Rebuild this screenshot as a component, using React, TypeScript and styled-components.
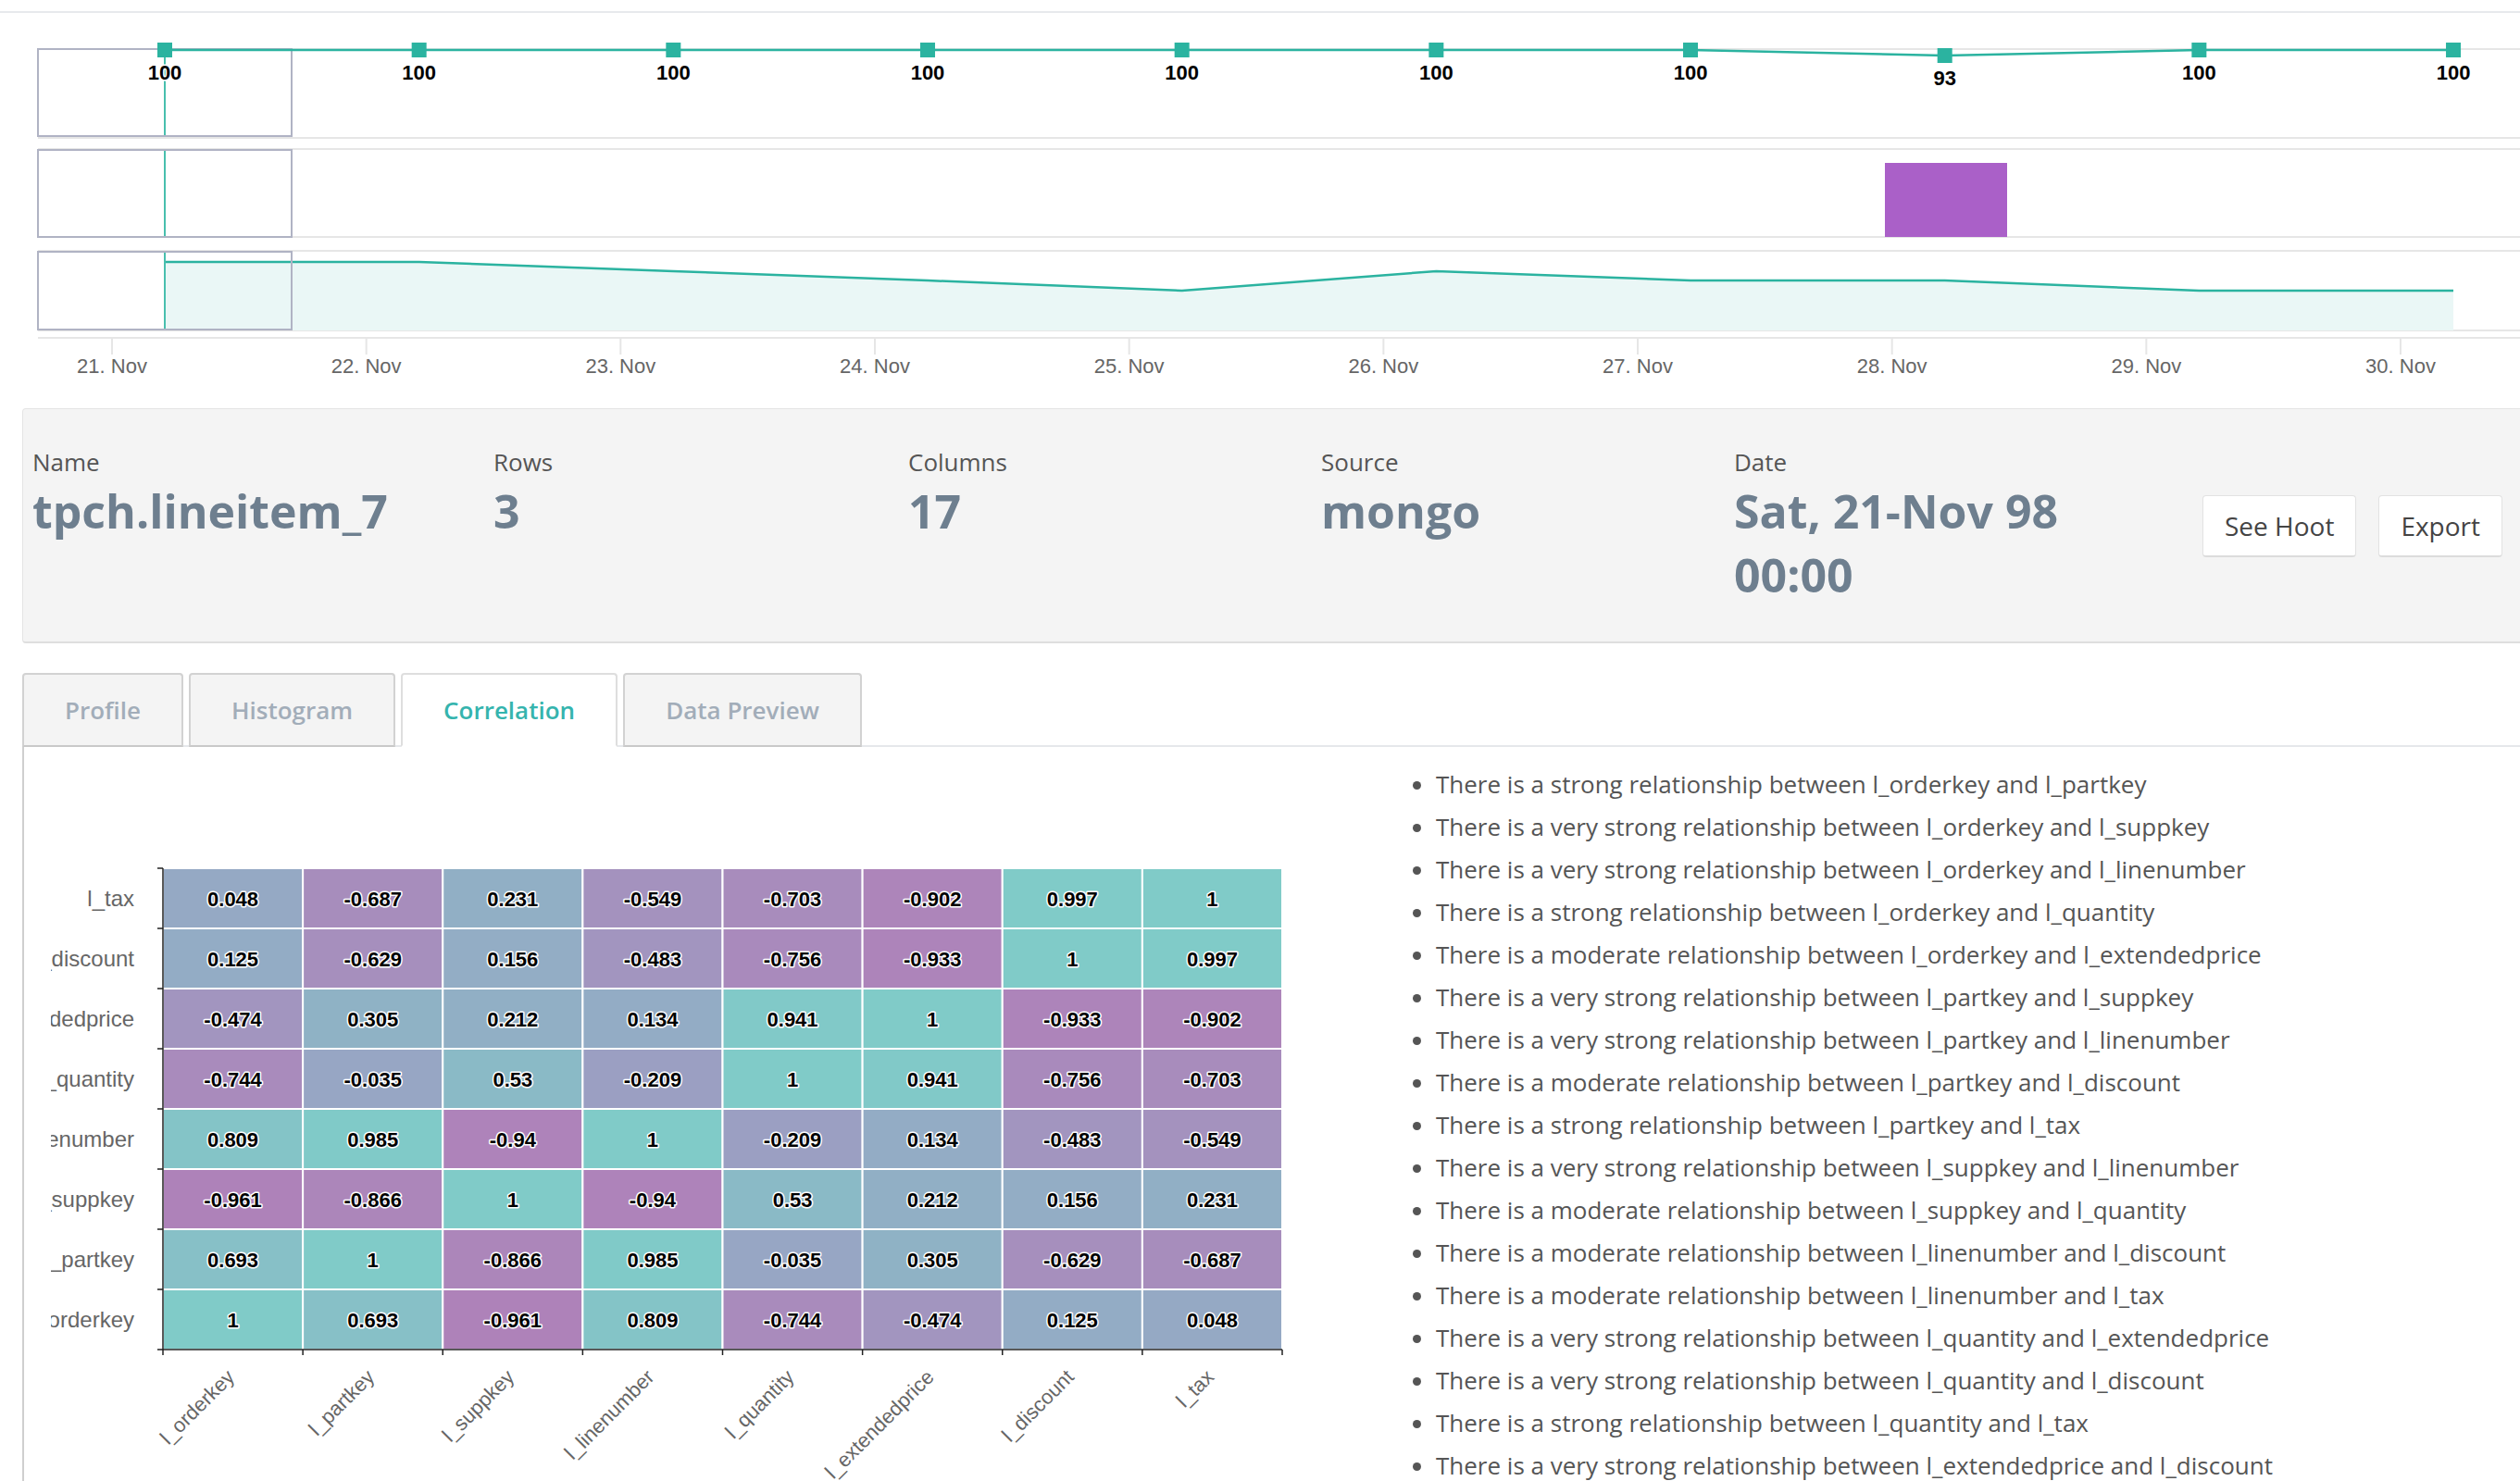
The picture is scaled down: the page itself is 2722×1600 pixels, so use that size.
import React from "react";
import styled, { createGlobalStyle } from "styled-components";

const GlobalStyle = createGlobalStyle`
  html, body { margin: 0; padding: 0; overflow: hidden; background: #fff; }
  body { font-family: "Open Sans", "Liberation Sans", Arial, sans-serif; }
  * { box-sizing: border-box; }
`;

const Page = styled.div`
  width: 2740px;
`;

const TopRule = styled.div`
  margin-top: 12px;
  height: 2px;
  background: #e7e9ec;
`;

const Timeline = styled.svg`
  display: block;
`;

const Main = styled.div`
  padding-left: 24px;
`;

const InfoCard = styled.section`
  margin-top: 21px;
  display: flex;
  align-items: center;
  padding: 39px 36px 37px 10px;
  background: #f4f4f4;
  border: 1px solid #e4e4e4;
  border-bottom: 2px solid #dedede;
  border-radius: 4px;
`;

const Stats = styled.div`
  display: flex;
  align-items: flex-start;
`;

const Stat = styled.div<{ $w: number }>`
  width: ${(p) => p.$w}px;
  flex: none;
`;

const StatLabel = styled.div`
  font-size: 26px;
  line-height: 37px;
  color: #555;
`;

const StatValue = styled.div`
  font-size: 50px;
  line-height: 69px;
  font-weight: 700;
  color: #6e7f8f;
`;

const Buttons = styled.div`
  margin-left: auto;
  display: flex;
  gap: 24px;
`;

const Button = styled.button`
  height: 67px;
  padding: 0 23px;
  font-family: "Open Sans", sans-serif;
  font-size: 28px;
  color: #444;
  background: #fff;
  border: 1px solid #e2e2e2;
  border-bottom: 2px solid #dcdcdc;
  border-radius: 4px;
`;

const TabBar = styled.div`
  margin-top: 32px;
  display: flex;
  align-items: flex-end;
  gap: 6px;
`;

const Tab = styled.div<{ $active?: boolean }>`
  position: relative;
  z-index: 1;
  height: 80px;
  margin-bottom: -2px;
  padding: 0 44px;
  display: flex;
  align-items: center;
  justify-content: center;
  font-size: 26px;
  font-weight: 600;
  color: ${(p) => (p.$active ? "#35b4ae" : "#a2adb9")};
  background: ${(p) => (p.$active ? "#fff" : "#f4f4f4")};
  border: 2px solid ${(p) => (p.$active ? "#dedede" : "#d2d2d2")};
  border-bottom: 2px solid ${(p) => (p.$active ? "#fff" : "#c9c9c9")};
  border-radius: 4px 4px 0 0;
`;

const Panel = styled.div`
  display: flex;
  align-items: flex-start;
  border-top: 2px solid #e6e8eb;
  border-left: 2px solid #cfcfcf;
  height: 900px;
`;

const Heatmap = styled.svg`
  display: block;
  flex: none;
  margin-left: 29px;
`;

const Findings = styled.ul`
  margin: 17px 0 0;
  padding-left: 96px;
  list-style: disc;
  color: #555;
  font-size: 26px;
  line-height: 46px;
`;

const Finding = styled.li``;

const AxisDate = styled.text`
  font-family: "Liberation Sans", Arial, sans-serif;
  font-size: 22px;
  fill: #666;
  text-anchor: middle;
`;

const PointLabel = styled.text`
  font-family: "Liberation Sans", Arial, sans-serif;
  font-size: 22px;
  font-weight: 700;
  fill: #000;
  stroke: #fff;
  stroke-width: 3px;
  stroke-linejoin: round;
  paint-order: stroke;
  text-anchor: middle;
`;

const CatLabel = styled.text<{ $size: number }>`
  font-family: "Liberation Sans", Arial, sans-serif;
  font-size: ${(p) => p.$size}px;
  fill: #666;
  text-anchor: end;
`;

const TEAL = "#2bb3a0";
const GRID = "#e6e6e6";
const NAV = "#b0b3c4";

const step = 274.67;
const pointX = (i: number) => 178 + i * step;
const tickX = (i: number) => 121 + i * step;
const quality = [100, 100, 100, 100, 100, 100, 100, 93, 100, 100];
const qY = (v: number) => 54 + (100 - v) * 0.86;
const rowsY = [283, 283, 293, 303, 314, 293, 303, 303, 314, 314];

function TimelineChart() {
  const W = 2740;
  const linePts = quality.map((v, i) => `${pointX(i)},${qY(v)}`).join(" ");
  const areaTop = rowsY.map((y, i) => `${pointX(i)},${y}`).join(" ");
  const areaPath = `M${pointX(0)},357 L${rowsY
    .map((y, i) => `${pointX(i)},${y}`)
    .join(" L")} L${pointX(9)},357 Z`;
  return (
    <Timeline width={W} height={406} viewBox={`0 14 ${W} 406`}>
      <line x1={41} y1={53} x2={W} y2={53} stroke={GRID} strokeWidth={2} />
      <line x1={41} y1={149} x2={W} y2={149} stroke={GRID} strokeWidth={2} />
      <line x1={41} y1={161} x2={W} y2={161} stroke={GRID} strokeWidth={2} />
      <line x1={41} y1={256} x2={W} y2={256} stroke={GRID} strokeWidth={2} />
      <line x1={41} y1={271} x2={W} y2={271} stroke={GRID} strokeWidth={2} />
      <line x1={41} y1={357} x2={W} y2={357} stroke={GRID} strokeWidth={2} />

      <path d={areaPath} fill="#eaf7f6" />
      <polyline points={areaTop} fill="none" stroke={TEAL} strokeWidth={2.5} />

      <rect x={2036} y={176} width={132} height={80} fill="#aa60c8" />

      <line x1={178} y1={54} x2={178} y2={148} stroke="#48bfae" strokeWidth={2} />
      <line x1={178} y1={162} x2={178} y2={256} stroke="#48bfae" strokeWidth={2} />
      <line x1={178} y1={272} x2={178} y2={356} stroke="#48bfae" strokeWidth={2} />

      <rect x={41} y={53} width={274} height={94} fill="none" stroke={NAV} strokeWidth={2} />
      <rect x={41} y={162} width={274} height={94} fill="none" stroke={NAV} strokeWidth={2} />
      <rect x={41} y={272} width={274} height={84} fill="none" stroke={NAV} strokeWidth={2} />

      <polyline points={linePts} fill="none" stroke={TEAL} strokeWidth={2.5} />
      {quality.map((v, i) => (
        <rect key={`m${i}`} x={pointX(i) - 8} y={qY(v) - 8} width={16} height={16} fill={TEAL} />
      ))}
      {quality.map((v, i) => (
        <PointLabel key={`l${i}`} x={pointX(i)} y={qY(v) + 32}>
          {v}
        </PointLabel>
      ))}

      <line x1={41} y1={365} x2={W} y2={365} stroke={GRID} strokeWidth={2} />
      {Array.from({ length: 10 }).map((_, i) => (
        <g key={`t${i}`}>
          <line x1={tickX(i)} y1={365} x2={tickX(i)} y2={383} stroke={GRID} strokeWidth={2} />
          <AxisDate x={tickX(i)} y={403}>
            {`${21 + i}. Nov`}
          </AxisDate>
        </g>
      ))}
    </Timeline>
  );
}

const rowNames = [
  "l_tax",
  "l_discount",
  "l_extendedprice",
  "l_quantity",
  "l_linenumber",
  "l_suppkey",
  "l_partkey",
  "l_orderkey",
];
const colNames = [
  "l_orderkey",
  "l_partkey",
  "l_suppkey",
  "l_linenumber",
  "l_quantity",
  "l_extendedprice",
  "l_discount",
  "l_tax",
];
const matrix = [
  [0.048, -0.687, 0.231, -0.549, -0.703, -0.902, 0.997, 1],
  [0.125, -0.629, 0.156, -0.483, -0.756, -0.933, 1, 0.997],
  [-0.474, 0.305, 0.212, 0.134, 0.941, 1, -0.933, -0.902],
  [-0.744, -0.035, 0.53, -0.209, 1, 0.941, -0.756, -0.703],
  [0.809, 0.985, -0.94, 1, -0.209, 0.134, -0.483, -0.549],
  [-0.961, -0.866, 1, -0.94, 0.53, 0.212, 0.156, 0.231],
  [0.693, 1, -0.866, 0.985, -0.035, 0.305, -0.629, -0.687],
  [1, 0.693, -0.961, 0.809, -0.744, -0.474, 0.125, 0.048],
];

const NEG = [175, 129, 185];
const MID = [150, 167, 196];
const POS = [128, 203, 200];
function cellColor(v: number) {
  const b = v < 0 ? NEG : POS;
  const t = Math.min(1, Math.abs(v));
  const c = MID.map((x, k) => Math.round(x + (b[k] - x) * t));
  return `rgb(${c[0]},${c[1]},${c[2]})`;
}

const HX = 176;
const HY = 938;
const CW = 151.125;
const CH = 65;

function CorrelationHeatmap() {
  const bottom = HY + CH * 8;
  const right = HX + CW * 8;
  return (
    <Heatmap width={1400} height={793} viewBox="55 807 1400 793">
      <line x1={HX} y1={HY} x2={right} y2={HY} stroke={GRID} strokeWidth={2} />
      {matrix.map((row, r) =>
        row.map((v, c) => (
          <rect
            key={`c${r}-${c}`}
            x={HX + c * CW}
            y={HY + r * CH}
            width={CW}
            height={CH}
            fill={cellColor(v)}
            stroke="#fff"
            strokeWidth={2}
          />
        ))
      )}
      {matrix.map((row, r) =>
        row.map((v, c) => (
          <PointLabel key={`v${r}-${c}`} x={HX + c * CW + CW / 2} y={HY + r * CH + CH / 2 + 8}>
            {String(v)}
          </PointLabel>
        ))
      )}
      <line x1={HX} y1={HY} x2={HX} y2={bottom} stroke="#222" strokeWidth={1.5} />
      {Array.from({ length: 9 }).map((_, r) => (
        <line key={`yt${r}`} x1={HX - 6} y1={HY + r * CH} x2={HX} y2={HY + r * CH} stroke="#222" strokeWidth={1.5} />
      ))}
      {rowNames.map((n, r) => (
        <CatLabel key={`rn${r}`} $size={24} x={145} y={HY + r * CH + CH / 2 + 8}>
          {n}
        </CatLabel>
      ))}
      <line x1={HX} y1={bottom} x2={right} y2={bottom} stroke="#222" strokeWidth={1.5} />
      {Array.from({ length: 9 }).map((_, c) => (
        <line key={`xt${c}`} x1={HX + c * CW} y1={bottom} x2={HX + c * CW} y2={bottom + 6} stroke="#222" strokeWidth={1.5} />
      ))}
      {colNames.map((n, c) => {
        const x = HX + c * CW + CW / 2 + 3;
        const y = 1489;
        return (
          <CatLabel key={`cn${c}`} $size={22} x={x} y={y} transform={`rotate(-45 ${x} ${y})`}>
            {n}
          </CatLabel>
        );
      })}
    </Heatmap>
  );
}

const findings = [
  "There is a strong relationship between l_orderkey and l_partkey",
  "There is a very strong relationship between l_orderkey and l_suppkey",
  "There is a very strong relationship between l_orderkey and l_linenumber",
  "There is a strong relationship between l_orderkey and l_quantity",
  "There is a moderate relationship between l_orderkey and l_extendedprice",
  "There is a very strong relationship between l_partkey and l_suppkey",
  "There is a very strong relationship between l_partkey and l_linenumber",
  "There is a moderate relationship between l_partkey and l_discount",
  "There is a strong relationship between l_partkey and l_tax",
  "There is a very strong relationship between l_suppkey and l_linenumber",
  "There is a moderate relationship between l_suppkey and l_quantity",
  "There is a moderate relationship between l_linenumber and l_discount",
  "There is a moderate relationship between l_linenumber and l_tax",
  "There is a very strong relationship between l_quantity and l_extendedprice",
  "There is a very strong relationship between l_quantity and l_discount",
  "There is a strong relationship between l_quantity and l_tax",
  "There is a very strong relationship between l_extendedprice and l_discount",
  "There is a very strong relationship between l_extendedprice and l_tax",
  "There is a very strong relationship between l_discount and l_tax",
];

export default function App() {
  return (
    <Page>
      <GlobalStyle />
      <TopRule />
      <TimelineChart />
      <Main>
        <InfoCard>
          <Stats>
            <Stat $w={498}>
              <StatLabel>Name</StatLabel>
              <StatValue>tpch.lineitem_7</StatValue>
            </Stat>
            <Stat $w={448}>
              <StatLabel>Rows</StatLabel>
              <StatValue>3</StatValue>
            </Stat>
            <Stat $w={446}>
              <StatLabel>Columns</StatLabel>
              <StatValue>17</StatValue>
            </Stat>
            <Stat $w={446}>
              <StatLabel>Source</StatLabel>
              <StatValue>mongo</StatValue>
            </Stat>
            <Stat $w={440}>
              <StatLabel>Date</StatLabel>
              <StatValue>Sat, 21-Nov 98 00:00</StatValue>
            </Stat>
          </Stats>
          <Buttons>
            <Button>See Hoot</Button>
            <Button>Export</Button>
          </Buttons>
        </InfoCard>
        <TabBar>
          <Tab>Profile</Tab>
          <Tab>Histogram</Tab>
          <Tab $active>Correlation</Tab>
          <Tab>Data Preview</Tab>
        </TabBar>
        <Panel>
          <CorrelationHeatmap />
          <Findings>
            {findings.map((f) => (
              <Finding key={f}>{f}</Finding>
            ))}
          </Findings>
        </Panel>
      </Main>
    </Page>
  );
}
